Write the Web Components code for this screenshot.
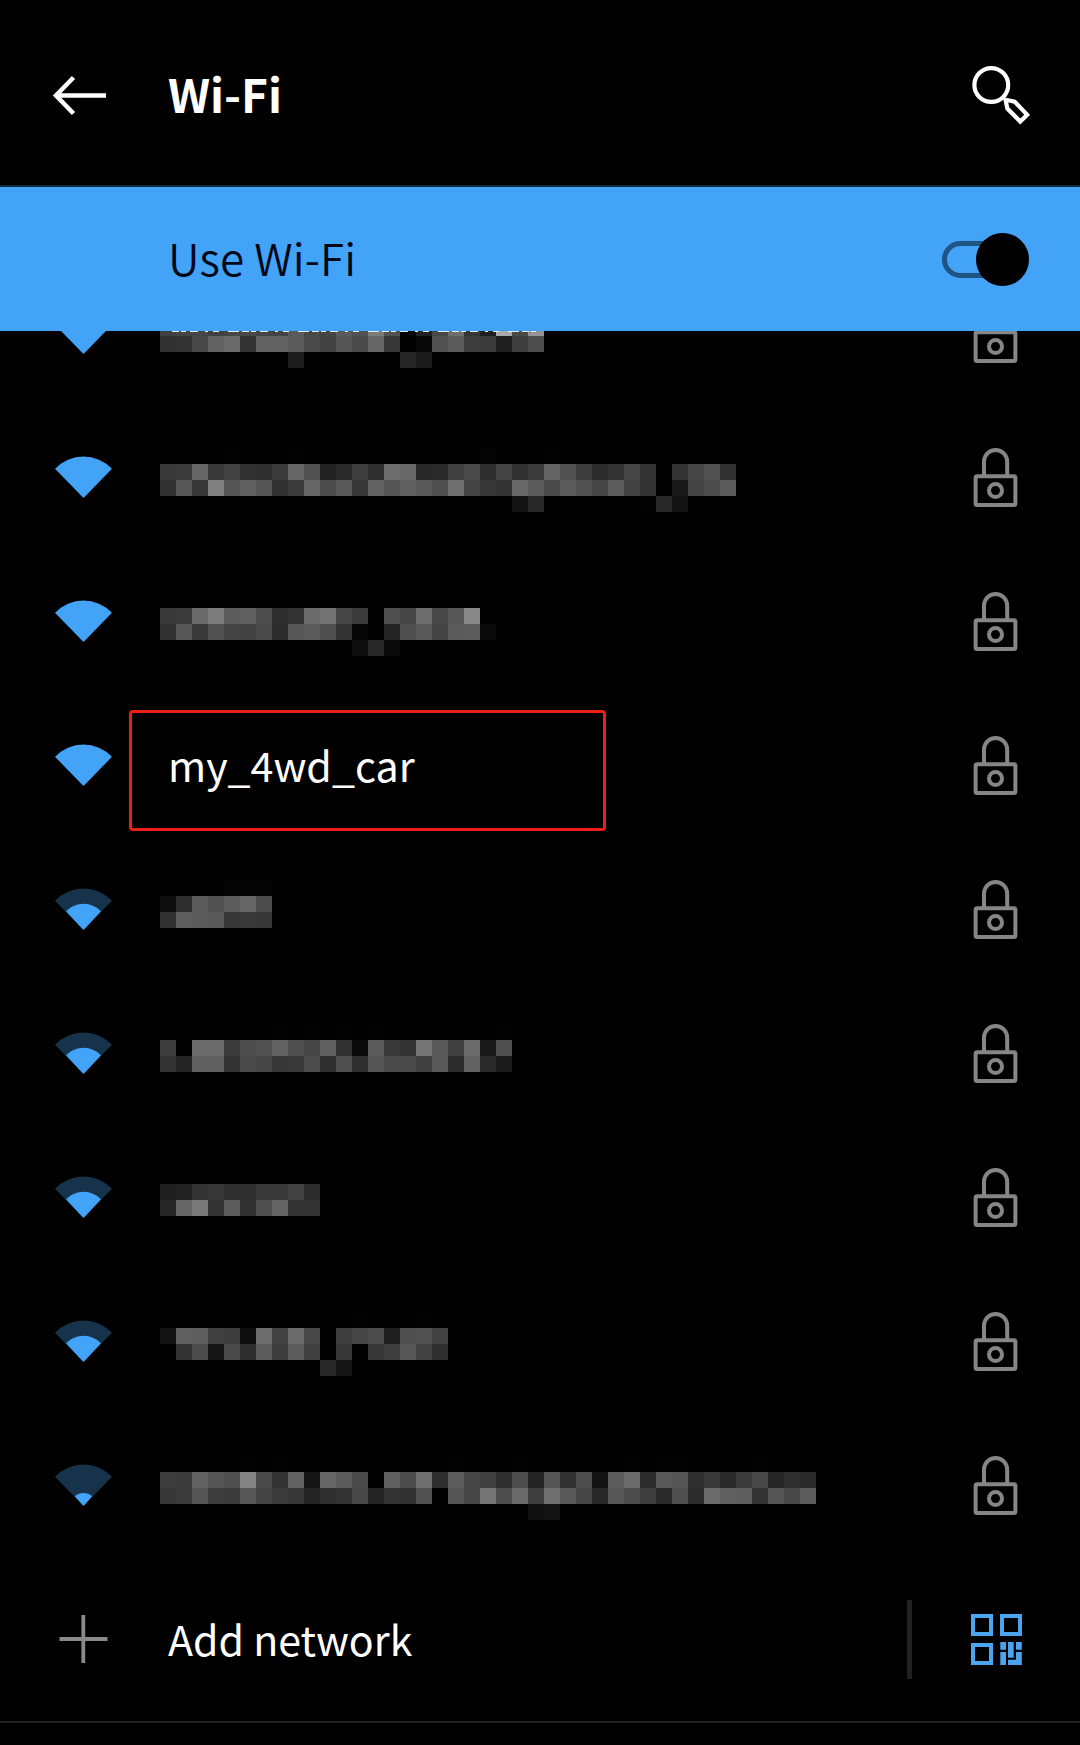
<!DOCTYPE html>
<html lang="en">
<head>
<meta charset="utf-8">
<title>Wi-Fi</title>
<style>
html,body{margin:0;background:#000}
body{width:1080px;height:1745px;overflow:hidden;font-family:"Noto Sans CJK SC",sans-serif;color:#fff}
</style>
</head>
<body>
<wifi-screen></wifi-screen>
<script>
const define=(name,html)=>customElements.define(name,class extends HTMLElement{
  constructor(){super();this.attachShadow({mode:'open'})}
  connectedCallback(){this.shadowRoot.innerHTML=typeof html==='function'?html(this):html}
});

define('app-header',`<style>
:host{display:flex;box-sizing:border-box;height:187px;padding:0 50px 0 52px;border-bottom:2px solid #10283c;align-items:center}
h1{margin:0 0 0 60px;flex:1;font-size:46px;line-height:60px;font-weight:700;white-space:nowrap}
svg{display:block}
</style>
<svg width="56" height="44" viewBox="52 74 56 44" style="margin-top:6px" fill="none" stroke="#fff" stroke-width="4.5"><path d="M106 95.5H57M73.5 77.5L56 95.5L73.5 113.5"/></svg>
<h1><slot></slot></h1>
<svg width="60" height="62" viewBox="970 64 60 62" style="margin-top:4px" fill="none" stroke="#fff" stroke-width="4.2"><circle cx="991.3" cy="85" r="16.9"/><path d="M1005.5 99.8L1014.6 101.6L1027.2 114.8L1020.3 121.6L1007.4 108.6Z"/></svg>`);

define('toggle-switch',`<style>
:host{display:flex;box-sizing:border-box;width:87px;height:53px;align-items:center}
.track{box-sizing:border-box;width:74px;height:37px;border:5px solid #1d5484;border-radius:19px}
.knob{width:53px;height:53px;border-radius:50%;background:#000;margin-left:-40px;flex:none}
</style><div class="track"></div><div class="knob"></div>`);

define('switch-bar',`<style>
:host{display:flex;box-sizing:border-box;height:144px;padding:0 51px 0 168px;background:#43a3f7;color:#020817;align-items:center}
span{flex:1;margin-top:-5px;font-size:44px;line-height:60px;font-weight:350;white-space:nowrap;letter-spacing:.15px}
</style><span><slot></slot></span><toggle-switch></toggle-switch>`);

define('signal-icon',host=>{
  const level=host.getAttribute('level');
  const outer=level==='3'?'#43a3f6':'#17334b';
  const inner={2:'<path fill="#43a3f6" d="M66 479.3A24 24 0 0 1 101 479.3L83.5 498Z"/>',1:'<path fill="#43a3f6" d="M74.8 488.3A13.5 13.5 0 0 1 92.2 488.3L83.5 498Z"/>'}[level]||'';
  return `<style>:host{display:block;width:60px;height:44px}svg{display:block}</style>
<svg width="60" height="44" viewBox="53 456 60 44"><path fill="${outer}" d="M55 468.8A39 39 0 0 1 112 468.8L83.5 498Z"/>${inner}</svg>`;
});

define('lock-icon',`<style>:host{display:block;width:46px;height:62px}svg{display:block}</style>
<svg width="46" height="62" viewBox="972 447 46 62" fill="none" stroke="#868686" stroke-width="4"><rect x="975.6" y="476.2" width="39.8" height="28.8" rx="1.5"/><path d="M984 475V461.5A11.6 11.6 0 0 1 1007.2 461.5V475"/><circle cx="995.5" cy="490.5" r="6.5"/></svg>`);

/* Obscured network name: rows of 16px grey cells, one hex level per cell. */
define('masked-name',host=>{
  let cells='';
  ['top','a','b','c'].forEach((key,row)=>{
    const values=(host.getAttribute(key)||'').trim();
    if(!values)return;
    values.split(/\s+/).forEach((v,i)=>{
      let col=i;
      if(v.includes(':')){const p=v.split(':');col=+p[0];v=p[1]}
      if(v!=='00')cells+=`<rect x="${col*16}" y="${row*16}" width="16" height="16" fill="#${v}${v}${v}"/>`;
    });
  });
  if(host.hasAttribute('clipped'))cells+='<path d="M12 27.5H380" stroke="#e2eef4" stroke-width="1" stroke-dasharray="7 2 5 4 8 7 3 5 6 9 11 3"/>';
  return `<style>:host{display:block;width:672px;height:64px}svg{display:block}</style><svg width="672" height="64" shape-rendering="crispEdges">${cells}</svg>`;
});

define('network-row',host=>`<style>
:host{display:flex;box-sizing:border-box;height:144px;padding:0 62px 0 53px;position:relative;align-items:flex-start}
signal-icon{margin-top:50px}
.name{flex:1;margin:42px 0 0 47px;height:64px}
.name ::slotted(span){display:block;margin-left:8px;margin-top:-2px;font-size:41.2px;line-height:60px;white-space:nowrap}
lock-icon{margin-top:41px}
.mark{position:absolute;left:129px;top:16px;width:477px;height:121px;box-sizing:border-box;border:3px solid #ec1e18;border-radius:4px}
</style><signal-icon level="${host.getAttribute('level')}"></signal-icon><div class="name"><slot></slot></div><lock-icon></lock-icon>${host.hasAttribute('marked')?'<div class="mark"></div>':''}`);

define('network-list',`<style>:host{display:block;height:1227px;overflow:hidden}div{margin-top:-69px}</style><div><slot></slot></div>`);

define('add-network',`<style>
:host{display:flex;box-sizing:border-box;height:165px;padding:0 58px 0 58px;border-bottom:2px solid #202020;align-items:center}
svg{display:block}
.plus{margin-top:-2px}
span{flex:1;margin:-4px 0 0 60px;font-size:41.1px;line-height:60px;white-space:nowrap}
i{width:5px;height:79px;background:#202020;margin-right:59px}
</style>
<svg class="plus" width="50" height="50" fill="none" stroke="#8a8a8a" stroke-width="3.8"><path d="M1.5 25H49.5M25.3 1V49"/></svg>
<span><slot></slot></span><i></i>
<svg width="51" height="51"><g fill="none" stroke="#4ba4ee" stroke-width="4"><path d="M2 2H20V20H2ZM31 2H49V20H31ZM2 31H20V49H2Z"/></g><path fill="#4ba4ee" d="M29.3 28H35V35.7H29.3ZM37 28H42.7V43.7H37ZM45 28H50.8V35.7H45ZM29.3 38H35V51H29.3ZM45 38H50.8V51H37V45.7H45Z"/></svg>`);

define('wifi-screen',`<style>:host{display:block;width:1080px;height:1745px;overflow:hidden;background:#000}</style>
<app-header>Wi-Fi</app-header>
<switch-bar>Use Wi-Fi</switch-bar>
<network-list>
<network-row level="3"><masked-name clipped a="40 44 46 40 46 49 44 44 5a 48 45 5b 51 7b 52 00 22 48 6e 36 20 aa 4a 94" b="32 34 48 62 6a 34 62 62 5a 4a 42 54 4a 66 36 00 08 52 5a 3c 3a 1e 3e 4e" c="8:1c 15:26 16:1a"></masked-name></network-row>
<network-row level="3"><masked-name top="4:03 8:03 20:04 24:02" a="38 3a 66 38 42 32 30 3a 66 52 22 2a 3e 30 6e 68 28 2a 40 4a 2e 44 32 3a 64 52 3c 2c 34 46 34 00 34 46 52 32" b="32 56 36 80 54 60 54 32 3a 66 4c 58 36 62 54 60 58 50 70 44 36 34 68 5a 4a 5a 52 46 5c 42 34 00 18 44 4c 5a" c="22:14 23:28 30:02 31:28 32:14"></masked-name></network-row>
<network-row level="3"><masked-name a="38 3a 6a 7c 5c 60 4e 2e 34 6c 72 46 3a 00 50 46 6e 48 56 88" b="32 56 38 52 44 42 4a 2c 56 5a 50 34 06 00 24 50 58 44 5a 5c 0a" c="12:0e 13:28 14:0a"></masked-name></network-row>
<network-row level="3" marked><span>my_4wd_car</span></network-row>
<network-row level="2"><masked-name top="4:04 5:04 6:05" a="0e 2e 5a 52 5c 66 4c" b="32 5e 5a 58 36 38 36"></masked-name></network-row>
<network-row level="2"><masked-name top="7:02 9:02 11:02 13:02 21:02" a="3c 00 6c 6c 3a 4e 52 62 50 46 60 32 0a 5a 38 34 74 58 40 6c 18 50" b="34 24 60 60 34 4a 46 36 38 4c 30 50 30 54 4a 4a 40 58 2c 62 2a 1a"></masked-name></network-row>
<network-row level="2"><masked-name a="1e 22 34 36 30 30 38 38 42 2c" b="26 66 78 34 5c 32 50 64 34 34"></masked-name></network-row>
<network-row level="2"><masked-name top="12:02 16:02" a="14 60 5e 40 3c 0e 6e 42 6c 48 00 3e 46 4c 1e 50 52 42" b="00 34 4c 16 4a 2e 5c 3c 5c 40 00 36 00 36 3e 56 42 30" c="10:28 11:16"></masked-name></network-row>
<network-row level="1"><masked-name top="5:02 7:02 18:02 22:03 29:03 31:03 32:03 37:03" a="3c 3a 62 54 50 84 4a 34 62 16 66 5a 4a 00 60 4c 70 2e 5c 46 40 30 4e 24 54 32 4e 14 5c 6c 2c 58 54 30 38 2a 3a 48 26 30 2a" b="36 3a 54 3c 3a 56 44 3a 36 24 30 34 48 24 34 32 52 00 54 46 74 4e 6a 3e 70 58 46 28 56 4c 3e 2a 50 2c 6c 60 5e 34 54 48 5c" c="23:10 24:14"></masked-name></network-row>
</network-list>
<add-network>Add network</add-network>`);
</script>
</body>
</html>
